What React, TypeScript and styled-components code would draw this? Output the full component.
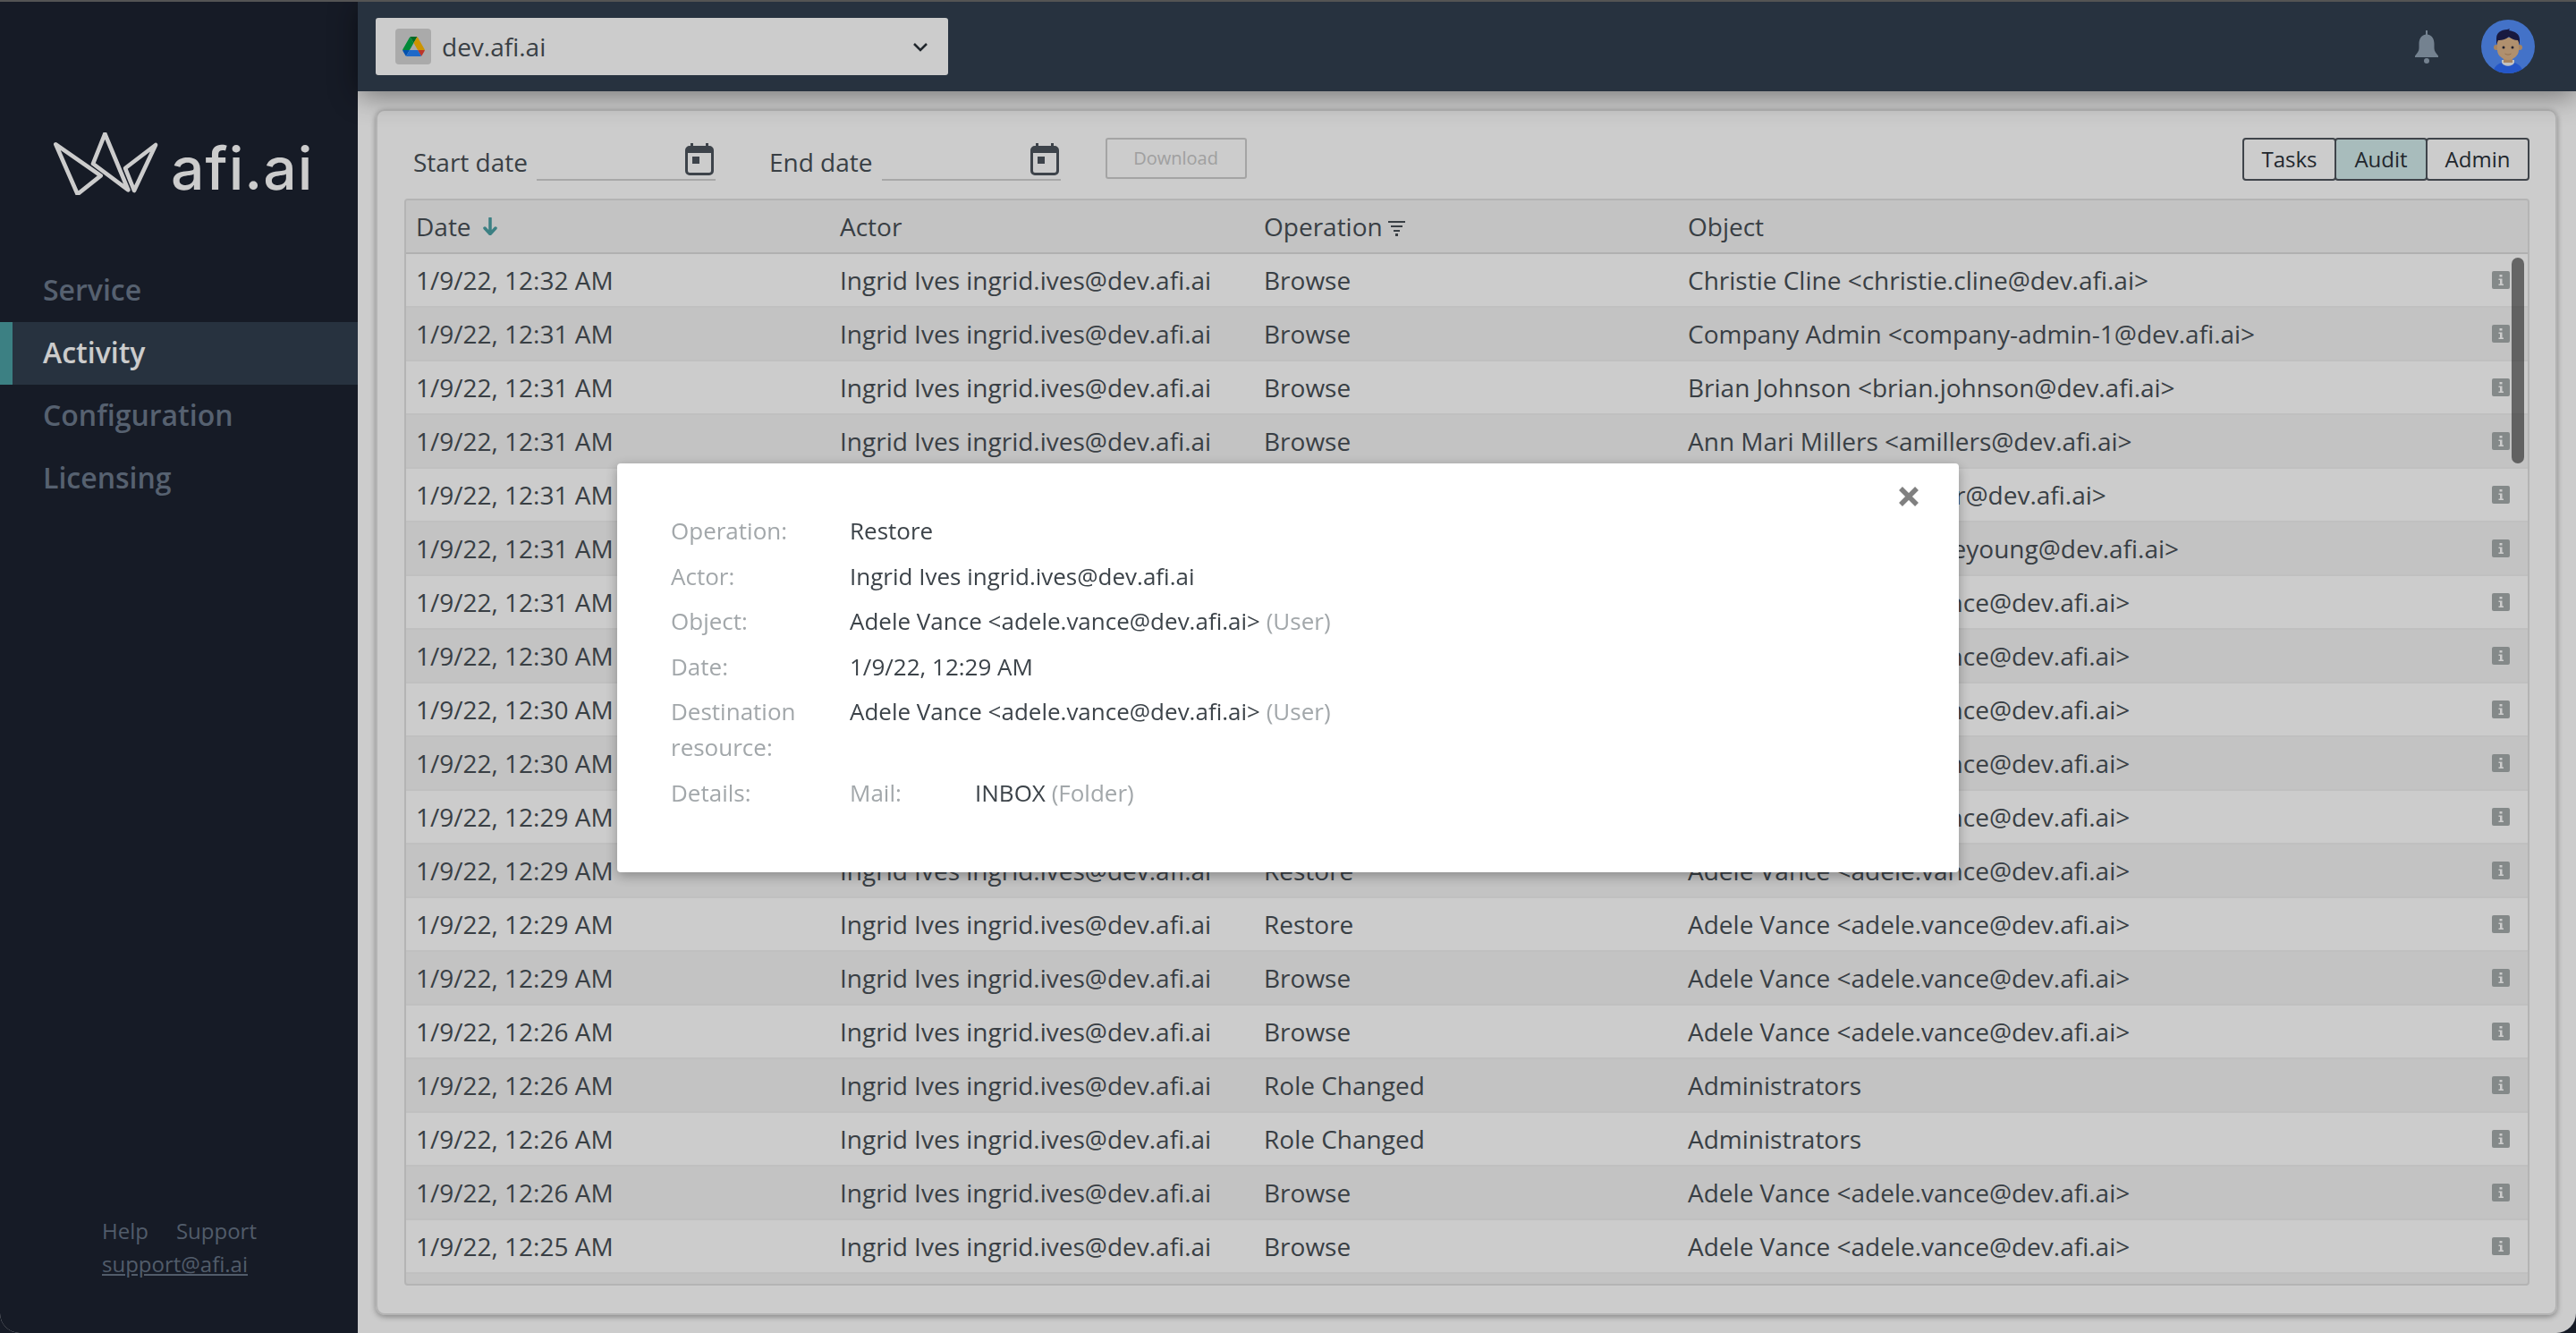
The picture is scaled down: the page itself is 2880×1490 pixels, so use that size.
import React from 'react';
import styled, { createGlobalStyle } from 'styled-components';

/* values are the undimmed ones, the modal scrim darkens everything by 20% */
const GlobalStyle = createGlobalStyle`
  html, body {
    margin: 0;
    height: 100%;
    overflow: hidden;
    background: #1c2230;
  }
  body {
    font-family: "Open Sans", "Noto Sans", sans-serif;
    color: #484f56;
  }
  * { box-sizing: border-box; }
`;

const Shell = styled.div`
  display: grid;
  grid-template-columns: 400px 1fr;
  height: 1490px;
  border-top: 2px solid #6a6a6a;
  border-radius: 0 0 22px 22px;
  overflow: hidden;
  background: #ffffff;
`;

const Sidebar = styled.aside`
  display: flex;
  flex-direction: column;
  background: #1c2230;
  padding-bottom: 59px;
`;

const LogoRow = styled.div`
  display: flex;
  align-items: flex-end;
  gap: 13px;
  height: 70px;
  margin: 146px 0 72px 60px;
`;

const LogoText = styled.span`
  margin-bottom: -5px;
  font-family: Inter, sans-serif;
  font-size: 66px;
  line-height: 70px;
  font-weight: 500;
  letter-spacing: 1px;
  color: #ffffff;
`;

const NavItem = styled.div<{ $active?: boolean }>`
  display: flex;
  align-items: center;
  height: 70px;
  padding-bottom: 3px;
  padding-left: ${p => (p.$active ? '34px' : '48px')};
  border-left: ${p => (p.$active ? '14px solid #4ba0a4' : 'none')};
  background: ${p => (p.$active ? '#313f4f' : 'transparent')};
  color: ${p => (p.$active ? '#ffffff' : '#6c7a8c')};
  font-size: 32px;
  font-weight: 600;
`;

const SideFooter = styled.div`
  margin-top: auto;
  padding-left: 114px;
  font-size: 24px;
  line-height: 37px;
  color: #667385;
`;

const FooterLinks = styled.div`
  display: flex;
  gap: 31px;
`;

const Mail = styled.a`
  color: inherit;
  text-decoration: underline;
`;

const Main = styled.main`
  display: flex;
  flex-direction: column;
  min-width: 0;
`;

const TopBar = styled.header`
  position: relative;
  z-index: 1;
  flex: none;
  display: flex;
  align-items: center;
  height: 100px;
  padding: 0 46px 0 20px;
  background: #313f4f;
  box-shadow: 0 4px 30px rgba(0, 0, 0, 0.45);
`;

const TenantSelect = styled.div`
  display: flex;
  align-items: center;
  gap: 12px;
  width: 640px;
  height: 64px;
  padding: 0 22px;
  border-radius: 3px;
  background: #ffffff;
  font-size: 28px;
  color: #484f56;
`;

const DriveBox = styled.span`
  display: flex;
  align-items: center;
  justify-content: center;
  width: 40px;
  height: 40px;
  border-radius: 4px;
  background: #d5d5d5;
`;

const Chevron = styled.svg`
  margin-left: auto;
`;

const TopActions = styled.div`
  display: flex;
  align-items: center;
  gap: 48px;
  margin-left: auto;
`;

const Content = styled.div`
  flex: 1;
  display: flex;
  min-height: 0;
  padding: 20px 21px 20px 20px;
`;

const Card = styled.section`
  flex: 1;
  display: flex;
  flex-direction: column;
  min-width: 0;
  padding: 0 29px 31px 30px;
  border: 2px solid #e0e0e0;
  border-radius: 10px;
  box-shadow: 0 2px 6px rgba(0, 0, 0, 0.35);
`;

const Toolbar = styled.div`
  flex: none;
  display: flex;
  align-items: flex-start;
  height: 98px;
  padding: 30px 0 0 10px;
`;

const DateField = styled.div<{ $gap: number }>`
  display: flex;
  align-items: flex-end;
  height: 48px;
  margin-right: ${p => p.$gap}px;
`;

const FieldLabel = styled.span`
  margin: 0 10px 1px 0;
  font-size: 28px;
  line-height: 40px;
`;

const DateInput = styled.div`
  display: flex;
  justify-content: flex-end;
  align-items: flex-end;
  width: 200px;
  height: 48px;
  padding: 0 2px 4px 0;
  border-bottom: 2px solid #d2d2d2;
`;

const DownloadButton = styled.button`
  width: 158px;
  height: 46px;
  padding: 0 0 1px;
  border: 2px solid #cecece;
  border-radius: 3px;
  background: transparent;
  color: #c8c8c8;
  font: inherit;
  font-size: 20px;
`;

const Tabs = styled.div`
  display: flex;
  margin-left: auto;
`;

const Tab = styled.div<{ $active?: boolean; $w: number }>`
  display: flex;
  align-items: center;
  justify-content: center;
  width: ${p => p.$w}px;
  height: 48px;
  margin-left: -2px;
  padding-bottom: 2px;
  border: 2px solid #4f555d;
  border-radius: 4px;
  background: ${p => (p.$active ? '#d3ebeb' : 'transparent')};
  color: #2a3139;
  font-size: 24px;
`;

const TableFrame = styled.div`
  position: relative;
  flex: 1;
  min-height: 0;
  overflow: hidden;
  border: 2px solid #e2e2e2;
  border-radius: 4px;
  background: #f4f4f4;
`;

const Row = styled.div<{ $shade?: boolean; $head?: boolean }>`
  display: grid;
  grid-template-columns: 474px 474px 474px 1fr;
  align-items: center;
  height: 60px;
  padding: 0 20px 0 11px;
  border-bottom: 2px solid ${p => (p.$head ? '#dcdcdc' : '#f0f0f0')};
  background: ${p => (p.$shade || p.$head ? '#f4f4f4' : '#ffffff')};
  font-size: 28px;
  white-space: nowrap;
`;

const HeadCell = styled.div`
  display: flex;
  align-items: center;
`;

const ObjectCell = styled.div`
  display: flex;
  align-items: center;
  justify-content: space-between;
`;

const InfoBadge = styled.span`
  display: flex;
  align-items: center;
  justify-content: center;
  width: 20px;
  height: 20px;
  border-radius: 2px;
  background: #a6acac;
`;

const ScrollThumb = styled.div`
  position: absolute;
  top: 64px;
  right: 4px;
  width: 14px;
  height: 230px;
  border-radius: 7px;
  background: rgba(0, 0, 0, 0.5);
`;

const Scrim = styled.div`
  position: fixed;
  inset: 0;
  z-index: 10;
  display: flex;
  align-items: center;
  justify-content: center;
  padding-top: 3px;
  background: rgba(0, 0, 0, 0.2);
`;

const Modal = styled.div`
  position: relative;
  width: 1500px;
  height: 457px;
  padding: 55px 60px 0;
  border-radius: 4px;
  background: #ffffff;
  box-shadow: 0 4px 14px rgba(0, 0, 0, 0.3);
  font-size: 26px;
  line-height: 40px;
  color: #3c4349;
`;

const CloseIcon = styled.svg`
  position: absolute;
  top: 26px;
  right: 45px;
`;

const DetailRow = styled.div`
  display: grid;
  grid-template-columns: 200px 1fr;
  margin-bottom: 10.6px;
`;

const DetailLabel = styled.span`
  color: #a2a7aa;
`;

const Muted = styled.span`
  color: #a2a7aa;
`;

const MailLine = styled.div`
  display: grid;
  grid-template-columns: 140px 1fr;
`;

const CalendarIcon = () => (
  <svg width="32" height="36" viewBox="0 0 32 36" aria-hidden="true">
    <rect x="6" y="0" width="3" height="6" fill="#4d545d" />
    <rect x="23" y="0" width="3" height="6" fill="#4d545d" />
    <rect x="1.5" y="4.5" width="29" height="30" rx="3.5" fill="none" stroke="#4d545d" strokeWidth="3" />
    <rect x="2" y="5" width="28" height="6" fill="#4d545d" />
    <rect x="8" y="15" width="8" height="8" fill="#4d545d" />
  </svg>
);

const SortArrow = () => (
  <svg width="16" height="20" viewBox="0 0 16 20" style={{ marginLeft: 13 }} aria-hidden="true">
    <path d="M8 1v17M2 12l6 6.5 6-6.5" fill="none" stroke="#4ba0a4" strokeWidth="3.5" strokeLinecap="round" strokeLinejoin="round" />
  </svg>
);

const FilterIcon = () => (
  <svg width="19" height="17" viewBox="0 0 19 17" style={{ marginLeft: 6, marginTop: 4 }} aria-hidden="true">
    <rect x="0" y="0" width="19" height="2" fill="#484f56" />
    <rect x="3" y="5" width="13" height="2" fill="#484f56" />
    <rect x="6" y="10" width="7" height="2" fill="#484f56" />
    <rect x="8" y="14" width="3" height="3" fill="#484f56" />
  </svg>
);

const DriveIcon = () => (
  <svg width="25" height="22" viewBox="0 0 87.3 78" aria-hidden="true">
    <path d="m6.6 66.85 3.85 6.65c.8 1.4 1.95 2.5 3.3 3.3l13.75-23.8h-27.5c0 1.55.4 3.1 1.2 4.5z" fill="#0066da" />
    <path d="m43.65 25-13.75-23.8c-1.35.8-2.5 1.9-3.3 3.3l-25.4 44a9.06 9.06 0 0 0 -1.2 4.5h27.5z" fill="#00ac47" />
    <path d="m73.55 76.8c1.35-.8 2.5-1.9 3.3-3.3l1.6-2.75 7.65-13.25c.8-1.4 1.2-2.95 1.2-4.5h-27.502l5.852 11.5z" fill="#ea4335" />
    <path d="m43.65 25 13.75-23.8c-1.35-.8-2.9-1.2-4.5-1.2h-18.5c-1.6 0-3.15.45-4.5 1.2z" fill="#00832d" />
    <path d="m59.8 53h-32.3l-13.75 23.8c1.35.8 2.9 1.2 4.5 1.2h50.8c1.6 0 3.15-.45 4.5-1.2z" fill="#2684fc" />
    <path d="m73.4 26.5-12.7-22c-.8-1.4-1.95-2.5-3.3-3.3l-13.75 23.8 16.15 28h27.45c0-1.55-.4-3.1-1.2-4.5z" fill="#ffba00" />
  </svg>
);

const CrownLogo = () => (
  <svg width="118" height="70" viewBox="90 55 354 210" aria-hidden="true">
    <g fill="none" stroke="#ffffff" strokeWidth="14" strokeLinejoin="round">
      <path d="M97 95 248 200 170 262Z" />
      <path d="M262 60 340 248 222 160Z" />
      <path d="M432 97 360 250 330 175Z" />
    </g>
  </svg>
);

const BellIcon = () => (
  <svg width="26" height="37" viewBox="0 0 26 37" aria-hidden="true">
    <path
      d="M12 0h2v4.500c5 1 7.500 5 7.500 10.500v5c0 3 2 5.500 4.500 8.500v1.500H0V28.500C2.500 25.500 4.500 23 4.500 20v-5C4.500 9.500 7 5.500 12 4.500Z"
      fill="#92a3b4"
    />
    <circle cx="13" cy="34" r="3" fill="#92a3b4" />
  </svg>
);

const Avatar = () => (
  <svg width="60" height="60" viewBox="0 0 60 60" aria-hidden="true">
    <defs>
      <clipPath id="avatar-clip">
        <circle cx="30" cy="30" r="30" />
      </clipPath>
    </defs>
    <g clipPath="url(#avatar-clip)">
      <rect width="60" height="60" fill="#548ffa" />
      <path d="M13 60c1-9 8-13 17-13s16 4 17 13Z" fill="#2e6cfa" />
      <path d="M23 45v3c2 5 12 5 14 0v-3Z" fill="#f2f2f2" />
      <rect x="25" y="38" width="10" height="10" fill="#d2a678" />
      <circle cx="17" cy="31" r="3" fill="#d2a678" />
      <circle cx="43" cy="31" r="3" fill="#d2a678" />
      <path d="M18 20h24v14c0 6-6 11-12 11S18 40 18 34Z" fill="#ddb48a" />
      <path d="M17 28v-7c0-7 6-10 12-10l3-1-1 2c7 1 12 4 12 10v6l-2-5c-4 0-8-2-10-4-3 3-8 4-12 4Z" fill="#1e2050" />
      <circle cx="25" cy="31" r="1.500" fill="#2b2b3a" />
      <circle cx="35" cy="31" r="1.500" fill="#2b2b3a" />
      <path d="M26.500 38c2 1.500 5 1.500 7 0" fill="none" stroke="#b98d63" strokeWidth="1" />
    </g>
  </svg>
);

const InfoGlyph = () => (
  <svg width="6" height="12" viewBox="0 0 6 12" aria-hidden="true">
    <rect x="1.500" y="0" width="3" height="2.500" fill="#ffffff" />
    <path d="M0.500 4.500h4V10.500h1.500V12H0.500v-1.500H2V6H0.500Z" fill="#ffffff" />
  </svg>
);

const ACTOR = 'Ingrid Ives ingrid.ives@dev.afi.ai';
const ADELE = 'Adele Vance <adele.vance@dev.afi.ai>';

const rows: [string, string, string][] = [
  ['1/9/22, 12:32 AM', 'Browse', 'Christie Cline <christie.cline@dev.afi.ai>'],
  ['1/9/22, 12:31 AM', 'Browse', 'Company Admin <company-admin-1@dev.afi.ai>'],
  ['1/9/22, 12:31 AM', 'Browse', 'Brian Johnson <brian.johnson@dev.afi.ai>'],
  ['1/9/22, 12:31 AM', 'Browse', 'Ann Mari Millers <amillers@dev.afi.ai>'],
  ['1/9/22, 12:31 AM', 'Browse', 'Alex Wilber <alex.wilber@dev.afi.ai>'],
  ['1/9/22, 12:31 AM', 'Browse', 'Christine Leyoung <chleyoung@dev.afi.ai>'],
  ['1/9/22, 12:31 AM', 'Browse', ADELE],
  ['1/9/22, 12:30 AM', 'Browse', ADELE],
  ['1/9/22, 12:30 AM', 'Browse', ADELE],
  ['1/9/22, 12:30 AM', 'Browse', ADELE],
  ['1/9/22, 12:29 AM', 'Restore', ADELE],
  ['1/9/22, 12:29 AM', 'Restore', ADELE],
  ['1/9/22, 12:29 AM', 'Restore', ADELE],
  ['1/9/22, 12:29 AM', 'Browse', ADELE],
  ['1/9/22, 12:26 AM', 'Browse', ADELE],
  ['1/9/22, 12:26 AM', 'Role Changed', 'Administrators'],
  ['1/9/22, 12:26 AM', 'Role Changed', 'Administrators'],
  ['1/9/22, 12:26 AM', 'Browse', ADELE],
  ['1/9/22, 12:25 AM', 'Browse', ADELE],
];

const App = () => (
  <>
    <GlobalStyle />
    <Shell>
      <Sidebar>
        <LogoRow>
          <CrownLogo />
          <LogoText>afi.ai</LogoText>
        </LogoRow>
        <NavItem>Service</NavItem>
        <NavItem $active>Activity</NavItem>
        <NavItem>Configuration</NavItem>
        <NavItem>Licensing</NavItem>
        <SideFooter>
          <FooterLinks>
            <span>Help</span>
            <span>Support</span>
          </FooterLinks>
          <Mail href="#">support@afi.ai</Mail>
        </SideFooter>
      </Sidebar>

      <Main>
        <TopBar>
          <TenantSelect>
            <DriveBox>
              <DriveIcon />
            </DriveBox>
            dev.afi.ai
            <Chevron width="18" height="11" viewBox="0 0 18 11" aria-hidden="true">
              <path d="M2 2l7 7 7-7" fill="none" stroke="#2a3139" strokeWidth="2.500" />
            </Chevron>
          </TenantSelect>
          <TopActions>
            <BellIcon />
            <Avatar />
          </TopActions>
        </TopBar>

        <Content>
          <Card>
            <Toolbar>
              <DateField $gap={60}>
                <FieldLabel>Start date</FieldLabel>
                <DateInput>
                  <CalendarIcon />
                </DateInput>
              </DateField>
              <DateField $gap={50}>
                <FieldLabel>End date</FieldLabel>
                <DateInput>
                  <CalendarIcon />
                </DateInput>
              </DateField>
              <DownloadButton disabled>Download</DownloadButton>
              <Tabs>
                <Tab $w={105}>Tasks</Tab>
                <Tab $w={104} $active>Audit</Tab>
                <Tab $w={116}>Admin</Tab>
              </Tabs>
            </Toolbar>

            <TableFrame>
              <Row $head>
                <HeadCell>
                  Date
                  <SortArrow />
                </HeadCell>
                <HeadCell>Actor</HeadCell>
                <HeadCell>
                  Operation
                  <FilterIcon />
                </HeadCell>
                <HeadCell>Object</HeadCell>
              </Row>
              {rows.map(([date, operation, object], i) => (
                <Row key={i} $shade={i % 2 === 1}>
                  <span>{date}</span>
                  <span>{ACTOR}</span>
                  <span>{operation}</span>
                  <ObjectCell>
                    <span>{object}</span>
                    <InfoBadge>
                      <InfoGlyph />
                    </InfoBadge>
                  </ObjectCell>
                </Row>
              ))}
              <ScrollThumb />
            </TableFrame>
          </Card>
        </Content>
      </Main>
    </Shell>

    <Scrim>
      <Modal>
        <CloseIcon width="22" height="22" viewBox="0 0 22 22" aria-hidden="true">
          <path d="M2 2l18 18M20 2L2 20" stroke="#808080" strokeWidth="5.500" />
        </CloseIcon>
        <DetailRow>
          <DetailLabel>Operation:</DetailLabel>
          <span>Restore</span>
        </DetailRow>
        <DetailRow>
          <DetailLabel>Actor:</DetailLabel>
          <span>{ACTOR}</span>
        </DetailRow>
        <DetailRow>
          <DetailLabel>Object:</DetailLabel>
          <span>
            {ADELE} <Muted>(User)</Muted>
          </span>
        </DetailRow>
        <DetailRow>
          <DetailLabel>Date:</DetailLabel>
          <span>1/9/22, 12:29 AM</span>
        </DetailRow>
        <DetailRow>
          <DetailLabel>
            Destination
            <br />
            resource:
          </DetailLabel>
          <span>
            {ADELE} <Muted>(User)</Muted>
          </span>
        </DetailRow>
        <DetailRow>
          <DetailLabel>Details:</DetailLabel>
          <MailLine>
            <DetailLabel>Mail:</DetailLabel>
            <span>
              INBOX <Muted>(Folder)</Muted>
            </span>
          </MailLine>
        </DetailRow>
      </Modal>
    </Scrim>
  </>
);

export default App;
